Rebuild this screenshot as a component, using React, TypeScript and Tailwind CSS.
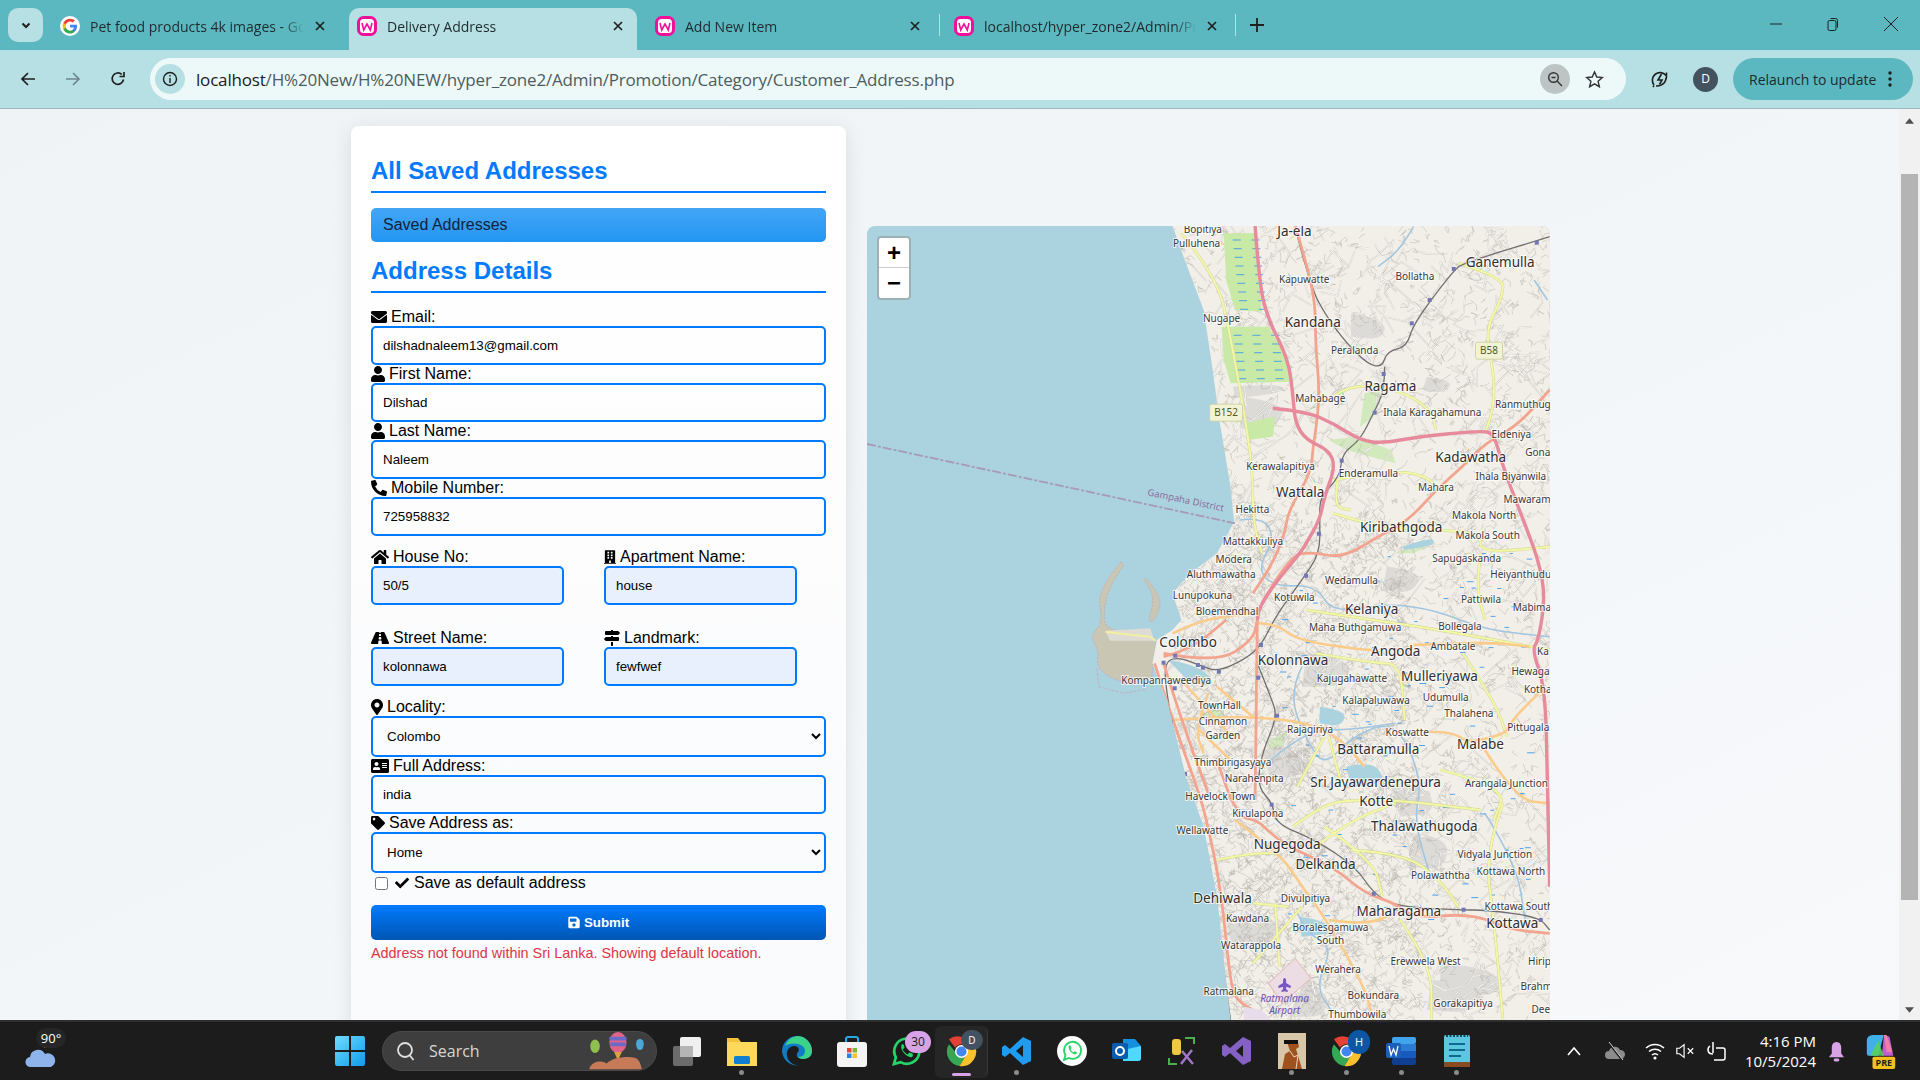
import type { ReactNode } from 'react'
import {
  FaAddressCard, FaBuilding, FaCheck, FaEnvelope, FaHome, FaMapMarkerAlt, FaMapSigns,
  FaPhoneAlt, FaPlane, FaRoad, FaSave, FaTag, FaUser,
} from 'react-icons/fa'

// map coordinates were read from two crops, x at 2.24x and y at 3x
type Pts = number[]
const mx = (x: number) => +(x / 2.24 - 7).toFixed(1)
const my = (y: number) => +(y / 3 - 6).toFixed(1)
const line = (p: Pts) => {
  let d = ''
  for (let i = 0; i < p.length; i += 2) d += `${i ? 'L' : 'M'}${mx(p[i])} ${my(p[i + 1])}`
  return d
}
const smooth = (p: Pts) => {
  let d = `M${mx(p[0])} ${my(p[1])}`
  for (let i = 2; i < p.length - 2; i += 2) {
    const ex = (p[i] + p[i + 2]) / 2
    const ey = (p[i + 1] + p[i + 3]) / 2
    d += `Q${mx(p[i])} ${my(p[i + 1])} ${mx(ex)} ${my(ey)}`
  }
  d += `L${mx(p[p.length - 2])} ${my(p[p.length - 1])}`
  return d
}

const LAND: Pts = [700,18,730,130,770,270,790,450,805,600,830,800,838,905,800,1000,740,1060,700,1120,720,1200,700,1230,665,1260,655,1330,690,1450,730,1670,770,1820,800,2030,830,2400,1560,2400,1560,18]
const PORT: Pts = [585,1025,530,1110,545,1205,515,1250,535,1290,530,1340,560,1375,620,1395,655,1380,655,1330,665,1260,640,1240,560,1230,545,1205,552,1120,590,1035]
const PORT2: Pts = [640,1075,680,1130,660,1205,645,1205,660,1130,636,1080]
const WET: Pts[] = [
  [815,40,885,40,895,200,900,275,840,270,820,180],
  [810,320,915,320,950,400,965,485,830,490,815,420],
  [860,610,930,590,925,650,870,660],
]
const GREEN: Pts[] = [
  [1050,660,1110,650,1190,690,1200,730,1170,720,1090,690],
  [1130,520,1170,510,1150,590,1120,620],
  [760,1480,810,1470,820,1500,780,1510],
  [920,1560,960,1530,940,1620,900,1630],
  [1200,1000,1260,960,1290,970,1240,1000],
]
const GREY: Pts[] = [
  [835,500,950,490,945,520,840,535],
  [860,530,960,550,930,620,880,640,850,620],
  [900,1590,1000,1560,1010,1660,920,1680],
  [1190,1700,1270,1690,1290,1780,1210,1790],
  [1300,2230,1420,2240,1440,2330,1300,2320],
  [1000,2270,1030,2300,1050,2390,960,2390],
  [1180,1040,1260,1050,1240,1120,1170,1110],
  [1100,280,1180,300,1170,360,1100,350],
  [1270,470,1330,480,1310,520,1260,510],
  [1000,1300,1100,1310,1090,1400,990,1400],
  [820,2090,940,2080,950,2180,830,2170],
  [1240,1840,1320,1850,1310,1950,1230,1940],
  [1280,2280,1400,2290,1380,2380,1270,2370],
]
const MOTORWAY: Pts[] = [
  [885,18,895,200,915,300,960,420,970,530,975,610,1000,660,1050,690,1065,740,1040,830,1030,900,995,980,985,1000,930,1090,895,1160,890,1200],
  [925,565,1000,575,1060,610,1120,660,1170,670,1250,650,1390,632,1420,640,1440,740,1480,880,1520,1020,1535,1130,1520,1260,1505,1290,1535,1400,1540,1700,1545,2000],
]
const TRUNK: Pts[] = [
  [975,18,1000,130,1020,250,1020,370,1030,520,1020,640,1015,680,1010,760,960,870,950,950,920,1040,880,1120],
  [900,1150,960,1010,1010,995,1080,1015,1160,950,1230,900,1290,810,1350,740,1400,670,1470,620,1545,510],
  [660,1330,700,1500,760,1720,780,1820,810,2020,830,2300,850,2350,910,2390],
  [680,1330,720,1500,780,1720],
  [800,1620,840,1790,890,1800,920,1840,960,1880,1060,1940,1130,2020,1200,2050,1240,2095,1370,2080,1460,2130,1545,2140],
  [890,1200,885,1740],
  [680,1300,800,1330,880,1260,890,1200],
  [680,1310,740,1290,820,1200],
]
const PRIMARY: Pts[] = [
  [700,1500,750,1495,890,1490,1010,1510,1080,1560,1130,1640],
  [780,1420,750,1530,770,1600],
  [890,1210,930,1210,980,1260,1100,1285,1145,1290],
  [1240,1275,1400,1265,1500,1280],
  [1270,1535,1330,1535,1360,1570,1450,1540,1460,1500,1520,1420],
  [1400,1590,1470,1740,1545,1750],
  [840,1800,940,1900,980,1980,1040,2090,1130,2300,1150,2400],
  [1050,2100,1130,2115,1200,2080],
  [830,1620,760,1530],
  [800,1400,880,1490],
  [700,1240,760,1200,870,1180],
  [720,1380,800,1500,840,1560],
]
const SECONDARY: Pts[] = [
  [720,40,800,170,830,350,870,650,880,780,880,900,900,1000],
  [1060,880,1150,920,1300,930,1390,940,1390,1000,1545,980],
  [1340,130,1440,170,1440,230,1400,330,1420,460,1420,560,1400,640],
  [1060,530,1100,490,1210,510,1280,570,1290,630],
  [1060,780,1200,750,1270,770,1290,800],
  [970,1820,1040,1750,1110,1740,1200,1740,1390,1770],
  [800,1920,870,1900,940,1900],
  [1040,1820,1150,1920,1170,2030],
  [1100,1890,1220,1900,1300,1980,1340,2060],
  [1210,2100,1280,2230,1280,2400],
  [1020,1300,1150,1330,1210,1330,1220,1500],
  [1350,1300,1420,1440,1450,1550],
  [930,2050,940,2240],
  [880,2050,960,2060],
  [980,1700,1040,1550],
  [1050,1550,1080,1700],
  [1000,1170,1150,1200,1300,1230,1545,1290],
  [1390,1000,1380,1100,1400,1200],
  [1440,1750,1400,1900,1420,2100,1440,2400],
  [880,2230,990,2060],
  [1070,780,1060,860,1100,870],
  [1300,1650,1450,1700,1420,1800],
  [1020,1880,1100,1800,1200,1750],
]
const RAIL: Pts[] = [
  [980,50,1010,200,1040,280,1090,370,1140,435,1170,440,1180,395,1225,380,1240,310,1330,150,1355,128,1545,50],
  [1175,440,1175,510,1150,580,1120,660,1080,700,1075,770,1030,830,1030,900,1030,1000,990,1080,930,1190,900,1275,860,1320,800,1355,760,1335,710,1310,680,1330,690,1450,720,1650,770,1900,800,2100,830,2400],
  [890,1330,920,1430,935,1490,900,1600,890,1700,925,1750,930,1810,1020,1860,1110,1940,1150,2020,1200,2060,1350,2070,1400,2070,1520,2090,1545,2130],
]
const STATIONS: Pts = [1330,147,1276,240,1236,310,1173,462,1153,578,1079,722,1028,941,999,1067,1516,68,898,1275,706,1307,757,1335,768,1343,804,1355,680,1328,705,1405,892,1373,934,1487,696,1505,728,1662,922,1754,1151,2021,1352,2069,1525,2100,790,2207,816,2352]
const RIVER: Pts[] = [
  [850,900,900,890,930,950,890,1050,930,1100,1020,1095,1060,1180,1180,1150,1290,1170,1400,1230,1545,1250],
  [990,1340,960,1420,1000,1560,1040,1640,1100,1550,1200,1500,1260,1680,1240,1800,1280,1980],
  [980,2080,1000,2140,1060,2180,1020,2300,1060,2380],
  [1240,20,1210,90,1160,140],
  [1510,180,1540,240],
  [1400,1780,1470,1930,1490,2100],
  [920,1620,1000,1530,1090,1530,1200,1510],
]
const LAKES: Pts[] = [
  [690,1320,760,1335,800,1400,740,1390],
  [1030,1460,1090,1470,1080,1520,1030,1510],
  [1090,1640,1150,1620,1180,1690,1100,1700],
  [985,2090,1040,2100,1060,2140,990,2150],
  [1215,980,1280,950,1290,975,1220,990],
]
const WIDE = new Set(['Ja-ela','Ganemulla','Kandana','Ragama','Kadawatha','Wattala','Kiribathgoda','Kelaniya','Colombo','Angoda','Kolonnawa','Mulleriyawa','Malabe','Battaramulla','Sri Jayawardenepura','Kotte','Thalawathugoda','Nugegoda','Delkanda','Dehiwala','Maharagama','Kottawa'])
const PLACES: [string, number, number][] = [
  ['Ja-ela',973,32],['Ganemulla',1434,127],['Kandana',1014,307],['Ragama',1188,497],['Kadawatha',1368,710],['Wattala',986,815],['Kiribathgoda',1212,921],['Kelaniya',1146,1167],
  ['Bopitiya',768,28],['Pulluhena',754,70],['Kapuwatte',995,178],['Bollatha',1243,170],['Nugape',810,295],['Peralanda',1108,392],['Mahabage',1031,535],['Ihala Karagahamuna',1282,577],['Ranmuthug',1485,553],['Eldeniya',1459,643],['Gona',1518,698],['Kerawalapitiya',942,739],['Enderamulla',1139,760],['Mahara',1290,803],['Ihala Biyanwila',1458,770],['Mawaram',1494,838],['Hekitta',879,868],['Makola North',1398,885],['Makola South',1406,946],['Mattakkuliya',880,963],['Modera',837,1017],['Sapugaskanda',1359,1014],['Aluthmawatha',809,1063],['Wedamulla',1101,1082],['Heiyanthudu',1480,1063],['Lunupokuna',767,1125],['Kotuwila',973,1133],['Pattiwila',1391,1138],['Mabima',1505,1163],['Bloemendhal',822,1173],['Maha Buthgamuwa',1109,1222],['Bollegala',1344,1219],
  ['Colombo',735,1266],['Angoda',1200,1292],['Kolonnawa',970,1320],['Ambatale',1328,1278],['Ka',1530,1295],['Hewaga',1502,1353],['Kotha',1518,1407],['Mulleriyawa',1298,1368],['Kompannaweediya',686,1380],['Kajugahawatte',1102,1376],['Kalapaluwawa',1156,1440],['Udumulla',1312,1433],['TownHall',805,1455],['Thalahena',1364,1479],['Cinnamon',813,1503],['Garden',813,1545],['Rajagiriya',1008,1527],['Koswatte',1226,1537],['Pittugala',1497,1523],['Malabe',1390,1572],['Battaramulla',1161,1588],['Thimbirigasyaya',835,1627],['Narahenpita',883,1675],['Sri Jayawardenepura',1155,1686],['Arangala Junction',1448,1690],['Havelock Town',807,1728],['Kotte',1156,1744],['Kirulapona',891,1780],['Thalawathugoda',1264,1817],['Wellawatte',767,1832],['Nugegoda',957,1873],['Vidyala Junction',1422,1904],['Delkanda',1043,1933],['Kottawa North',1458,1953],['Polawaththa',1300,1966],['Dehiwala',812,2035],['Divulpitiya',998,2035],['Kottawa South',1476,2058],['Maharagama',1207,2073],['Kawdana',868,2095],['Kottawa',1461,2108],['Boralesgamuwa',1054,2121],['South',1054,2160],['Watarappola',876,2175],['Erewwela West',1267,2223],['Hirip',1522,2224],['Werahera',1071,2248],['Brahm',1515,2298],['Ratmalana',826,2313],['Bokundara',1150,2325],['Gorakapitiya',1351,2351],['Dee',1525,2367],['Thumbowila',1114,2384],
]

// fixed seed so the street texture is the same on every load
function prng(seed: number) {
  let s = seed
  return () => {
    s = (s * 16807) % 2147483647
    return s / 2147483647
  }
}

function walks(seed: number, count: number, step: number, urban: boolean) {
  const r = prng(seed)
  let d = ''
  for (let i = 0; i < count; i++) {
    let x = 700 + r() * 860
    let y = 18 + r() * 2380
    // the south west is more built up
    if (urban && i % 2 === 0) {
      x = 720 + r() * 520
      y = 900 + r() * 1500
    }
    let px = mx(x)
    let py = my(y)
    d += `M${px} ${py}`
    const n = 2 + Math.floor(r() * 3)
    for (let j = 0; j < n; j++) {
      px = +(px + (r() - 0.5) * step).toFixed(1)
      py = +(py + (r() - 0.5) * step).toFixed(1)
      d += `L${px} ${py}`
    }
  }
  return d
}
const STREETS = walks(12345, 4200, 13, true)
const LANES = walks(777, 420, 44, false)

function wetDashes() {
  let d = ''
  for (let y = 60; y < 480; y += 26) {
    for (let x = 835; x < 940; x += 42) {
      const off = (y * 7) % 20
      if (y > 280 && y < 330) continue
      if (y < 280 && x > 900) continue
      d += `M${mx(x + off)} ${my(y)}h8`
    }
  }
  const r = prng(4242)
  for (let i = 0; i < 110; i++) {
    d += `M${mx(940 + r() * 560)} ${my(1000 + r() * 1100)}h${(3 + r() * 4).toFixed(1)}`
  }
  return d
}

function MapView() {
  const clip = 'land-clip'
  return (
    <svg viewBox="0 0 683 800" className="block w-[683px] h-[800px] bg-[#aad3df]" style={{ fontFamily: '"Noto Sans", sans-serif' }}>
      <defs>
        <clipPath id={clip}><path d={line(LAND) + 'Z'} /></clipPath>
      </defs>
      <path d={smooth(PORT) + 'Z'} fill="#c9c6b4" stroke="#c4a4b4" strokeWidth="0.7" strokeDasharray="2 1.5" />
      <path d={smooth(PORT2) + 'Z'} fill="#c9c7b4" stroke="#c4a4b4" strokeWidth="0.7" strokeDasharray="2 1.5" />
      <path d={line([550,1232,650,1225,660,1262,560,1262])+'Z'} fill="#dedbd5" />
      <path d={line([530,1345,535,1400,590,1420,640,1408])} fill="none" stroke="#c7a5b8" strokeWidth="0.8" strokeDasharray="3 1.5" />
      <path d={line([550,1235,590,1242,650,1250,662,1262])} fill="none" stroke="#f1f0a0" strokeWidth="2" />
      <path d={line(LAND) + 'Z'} fill="#f2efe9" />
      <g clipPath={`url(#${clip})`}>
        {GREEN.map((p, i) => <path key={i} d={line(p) + 'Z'} fill="#d2e9bd" />)}
        {GREY.map((p, i) => <path key={i} d={smooth(p) + 'Z'} fill="#dddbd8" />)}
        <path d={LANES} fill="none" stroke="#c9c5bd" strokeWidth="1.5" />
        <path d={LANES} fill="none" stroke="#fdfdfb" strokeWidth="0.8" />
        <path d={STREETS} fill="none" stroke="#b9b5ae" strokeWidth="0.5" />
        {WET.map((p, i) => <path key={i} d={line(p) + 'Z'} fill="#c9e9a6" />)}
        {LAKES.map((p, i) => <path key={i} d={smooth(p) + 'Z'} fill="#aad3df" />)}
        {RIVER.map((p, i) => <path key={i} d={smooth(p)} fill="none" stroke="#a3c6e0" strokeWidth="1.6" />)}
        <path d={wetDashes()} stroke="#3f9bea" strokeWidth="0.9" fill="none" />
        {SECONDARY.map((p, i) => <path key={i} d={smooth(p)} fill="none" stroke="#cfd48e" strokeWidth="2.8" />)}
        {SECONDARY.map((p, i) => <path key={i} d={smooth(p)} fill="none" stroke="#f4f7a8" strokeWidth="2" />)}
        {RAIL.map((p, i) => <path key={i} d={smooth(p)} fill="none" stroke="#6f6f6f" strokeWidth="1.3" />)}
        {PRIMARY.map((p, i) => <path key={i} d={smooth(p)} fill="none" stroke="#fbcb8a" strokeWidth="2.6" />)}
        {TRUNK.map((p, i) => <path key={i} d={smooth(p)} fill="none" stroke="#f3a48f" strokeWidth="2.8" />)}
        {MOTORWAY.map((p, i) => <path key={i} d={smooth(p)} fill="none" stroke="#e68a9c" strokeWidth="3.4" />)}
        {STATIONS.map((v, i) => i % 2 === 0 && <rect key={i} x={mx(v) - 2} y={my(STATIONS[i + 1]) - 2} width="4" height="4" fill="#7377b5" />)}
        <path d={line([915,2290,975,2215,1010,2275,945,2350])+'Z'} fill="#ecdde4" stroke="#e0a59a" strokeWidth="0.7" />
        <path d={line([860,2360,900,2370,920,2400,860,2400])+'Z'} fill="#e8dcea" />
      </g>
      <path d={line([16,672,840,910])} fill="none" stroke="#a899b4" strokeWidth="1.8" strokeDasharray="9 2 3 2" />
      <text transform={`translate(${mx(728)} ${my(850)}) rotate(12)`} textAnchor="middle" fontSize="9.5" fill="#8c6d9e">Gampaha District</text>
      {PLACES.map(([t, x, y]) => (
        <text
          key={t}
          x={mx(x)}
          y={my(y) + (WIDE.has(t) ? 5 : 3.6)}
          textAnchor="middle"
          fontSize={WIDE.has(t) ? 13.5 : 10}
          fill={WIDE.has(t) ? '#2e2e2e' : '#383838'}
          stroke="#ffffff"
          strokeOpacity="0.75"
          strokeWidth="2"
          paintOrder="stroke"
        >
          {t}
        </text>
      ))}
      <FaPlane x={mx(951) - 7} y={my(2295) - 7} size={14} color="#7a55c4" transform={`rotate(-90 ${mx(951)} ${my(2295)})`} />
      <text x={mx(951)} y={my(2335) + 3.5} textAnchor="middle" fontSize="10" fontStyle="italic" fill="#6d4fb6">Ratmalana</text>
      <text x={mx(951)} y={my(2372) + 3.5} textAnchor="middle" fontSize="10" fontStyle="italic" fill="#6d4fb6">Airport</text>
      <Shield x={1409} y={392} t="B58" />
      <Shield x={820} y={578} t="B152" />
    </svg>
  )
}

function Shield({ x, y, t }: { x: number; y: number; t: string }) {
  const w = t.length > 3 ? 33 : 27
  return (
    <g>
      <rect x={mx(x) - w / 2} y={my(y) - 8.5} width={w} height="17" rx="2" fill="#f1f3d4" stroke="#c9cc9a" strokeWidth="0.8" />
      <text x={mx(x)} y={my(y) + 3.5} textAnchor="middle" fontSize="10" fill="#55561f">{t}</text>
    </g>
  )
}

function Field({ icon, label, value, className }: { icon: ReactNode; label: string; value: string; className?: string }) {
  return (
    <div className={className}>
      <label className="flex items-center gap-[4px] h-[18px] text-[16px] text-black">{icon}{label}:</label>
      <input
        readOnly
        defaultValue={value}
        className="block w-full h-[39px] px-[10px] border-2 border-[#007bff] rounded-[5px] bg-transparent text-[13.33px] text-black outline-none"
      />
    </div>
  )
}

function Pick({ icon, label, value }: { icon: ReactNode; label: string; value: string }) {
  return (
    <div>
      <label className="flex items-center gap-[4px] h-[18px] text-[16px] text-black">{icon}{label}:</label>
      <select defaultValue={value} className="block w-full h-[41px] px-[10px] border-2 border-[#007bff] rounded-[5px] bg-transparent text-[13.33px] text-black outline-none">
        <option>{value}</option>
      </select>
    </div>
  )
}

const SAME = 'w-[16px] h-[16px] shrink-0'
const TINY = 'block w-full h-[39px] px-[10px] border-2 border-[#007bff] rounded-[5px] bg-[#e8f0fe] text-[13.33px] text-black outline-none'

function Small({ icon, label, value }: { icon: ReactNode; label: string; value: string }) {
  return (
    <div className="w-[193px]">
      <label className="flex items-center gap-[4px] h-[19px] text-[16px] text-black">{icon}{label}:</label>
      <input readOnly defaultValue={value} className={TINY} />
    </div>
  )
}

function AddressCard() {
  return (
    <div className="w-[495px] h-[1000px] shrink-0 px-[20px] pt-[20px] rounded-t-[8px] bg-gradient-to-b from-white to-[#f9fafc] shadow-[0_4px_20px_rgba(0,0,0,0.1)]" style={{ fontFamily: '"Liberation Sans", Arial, sans-serif' }}>
      <h2 className="h-[47px] pt-[11px] text-[24px] leading-[28px] font-bold text-[#007bff] border-b-2 border-[#007bff]">All Saved Addresses</h2>
      <div className="h-[34px] mt-[15px] pl-[12px] flex items-center rounded-[5px] text-[16px] text-[#10243a] bg-gradient-to-b from-[#42a5f5] to-[#2196f3]">Saved Addresses</div>
      <h2 className="h-[51px] mt-0 pt-[15px] text-[24px] leading-[28px] font-bold text-[#007bff] border-b-2 border-[#007bff]">Address Details</h2>
      <div className="mt-[15px]">
        <Field icon={<FaEnvelope className={SAME} />} label="Email" value="dilshadnaleem13@gmail.com" />
        <Field icon={<FaUser className="w-[14px] h-[16px] shrink-0" />} label="First Name" value="Dilshad" />
        <Field icon={<FaUser className="w-[14px] h-[16px] shrink-0" />} label="Last Name" value="Naleem" />
        <Field icon={<FaPhoneAlt className={SAME} />} label="Mobile Number" value="725958832" />
      </div>
      <div className="flex gap-[40px] mt-[11px]">
        <Small icon={<FaHome className="w-[18px] h-[16px] shrink-0" />} label="House No" value="50/5" />
        <Small icon={<FaBuilding className="w-[12px] h-[16px] shrink-0" />} label="Apartment Name" value="house" />
      </div>
      <div className="flex gap-[40px] mt-[23px]">
        <Small icon={<FaRoad className="w-[18px] h-[16px] shrink-0" />} label="Street Name" value="kolonnawa" />
        <Small icon={<FaMapSigns className={SAME} />} label="Landmark" value="fewfwef" />
      </div>
      <div className="mt-[12px]">
        <Pick icon={<FaMapMarkerAlt className="w-[12px] h-[16px] shrink-0" />} label="Locality" value="Colombo" />
        <Field icon={<FaAddressCard className="w-[18px] h-[16px] shrink-0" />} label="Full Address" value="india" />
        <Pick icon={<FaTag className="w-[14px] h-[16px] shrink-0" />} label="Save Address as" value="Home" />
      </div>
      <div className="flex items-center h-[20px] pl-[4px] text-[16px] text-black">
        <input type="checkbox" className="w-[13px] h-[13px] mr-[7px]" />
        <FaCheck className="w-[14px] h-[14px] mr-[5px]" />
        Save as default address
      </div>
      <button className="w-full h-[35px] mt-[12px] flex items-center justify-center gap-[4px] rounded-[5px] text-[13.33px] font-bold text-white bg-gradient-to-b from-[#007bff] to-[#0056b3]">
        <FaSave className="w-[12px] h-[13px]" />
        Submit
      </button>
      <p className="mt-[3px] text-[14.4px] text-[#dc3545]">Address not found within Sri Lanka. Showing default location.</p>
    </div>
  )
}

function WampIcon() {
  return (
    <svg viewBox="0 0 20 20" className="w-[20px] h-[20px] shrink-0">
      <rect x="1.5" y="1.5" width="17" height="17" rx="5" fill="#fff" stroke="#f0109a" strokeWidth="3" />
      <path d="M5 7l1.7 7 3.3-6 3.3 6L15 7" fill="none" stroke="#f0109a" strokeWidth="1.6" />
    </svg>
  )
}

function GoogleIcon() {
  return (
    <svg viewBox="0 0 48 48" className="w-[20px] h-[20px] shrink-0">
      <circle cx="24" cy="24" r="24" fill="#fff" />
      <path fill="#4285F4" d="M41 24.4c0-1.3-.1-2.300-.3-3.400H24v6.400h9.600c-.4 2.200-1.700 4-3.500 5.300v4.300h5.700c3.300-3.100 5.200-7.600 5.200-12.600z" />
      <path fill="#34A853" d="M24 42c4.700 0 8.700-1.600 11.700-4.300L30 33.400c-1.600 1.100-3.600 1.700-6 1.700-4.600 0-8.500-3.100-9.900-7.300H8.200v4.500C11.200 38.100 17.100 42 24 42z" />
      <path fill="#FBBC05" d="M14.100 27.800c-.4-1.100-.6-2.300-.6-3.600s.2-2.500.6-3.600v-4.500H8.200C7 18.400 6.300 21.100 6.300 24.200s.7 5.800 1.900 8.100l5.900-4.500z" />
      <path fill="#EA4335" d="M24 13.200c2.600 0 4.900.9 6.800 2.600l5-5C32.700 8 28.700 6.300 24 6.300c-6.900 0-12.800 3.900-15.800 9.800l5.900 4.500c1.400-4.200 5.300-7.400 9.900-7.400z" />
    </svg>
  )
}

function CloseX() {
  return (
    <svg viewBox="0 0 12 12" className="w-[12px] h-[12px] shrink-0" stroke="#1f1f1f" strokeWidth="1.700" fill="none">
      <path d="M2 2l8 8M10 2l-8 8" />
    </svg>
  )
}

function Tab({ icon, title, active, box, sep }: { icon: ReactNode; title: string; active?: boolean; box: string; sep?: boolean }) {
  return (
    <div className={`relative flex items-center h-[42px] pb-[6px] ${box} ${active ? 'bg-[#b7e0e4] rounded-t-[10px]' : ''}`}>
      {icon}
      <span className="flex-1 ml-[10px] mr-[10px] overflow-hidden whitespace-nowrap text-[14px] text-[#1f2a2c]" style={{ maskImage: 'linear-gradient(90deg,#000 90%,transparent)' }}>{title}</span>
      <CloseX />
      {sep && <span className="absolute right-0 top-[6px] w-[1px] h-[22px] bg-[#b7e0e4]" />}
    </div>
  )
}

function TabStrip() {
  return (
    <div className="h-[50px] flex items-end bg-[#5bb8c1] shrink-0" style={{ fontFamily: '"Open Sans", sans-serif' }}>
      <div className="w-[35px] h-[34px] ml-[8px] mb-[8px] rounded-[10px] bg-[#b7e0e4] flex items-center justify-center">
        <svg viewBox="0 0 12 12" className="w-[12px] h-[12px]" fill="none" stroke="#1f1f1f" strokeWidth="2"><path d="M2.500 4.500L6 8l3.500-3.500" /></svg>
      </div>
      <Tab icon={<GoogleIcon />} title="Pet food products 4k images - Google Search" box="w-[292px] ml-[5px] pl-[12px] pr-[14px]" />
      <Tab icon={<WampIcon />} title="Delivery Address" active box="w-[288px] ml-[9px] pl-[8px] pr-[13px]" />
      <Tab icon={<WampIcon />} title="Add New Item" box="w-[303px] pl-[18px] pr-[19px]" sep />
      <Tab icon={<WampIcon />} title="localhost/hyper_zone2/Admin/Promotion" box="w-[296px] pl-[14px] pr-[18px]" sep />
      <svg viewBox="0 0 14 14" className="w-[14px] h-[14px] ml-[14px] mb-[18px]" stroke="#1f1f1f" strokeWidth="1.800"><path d="M7 0v14M0 7h14" /></svg>
      <div className="flex-1" />
      <div className="flex items-center h-[48px] self-start text-[#1f1f1f]">
        <svg viewBox="0 0 14 14" className="w-[14px] h-[14px] mr-[43px]" stroke="currentColor" strokeWidth="1"><path d="M1 7h12" /></svg>
        <svg viewBox="0 0 14 14" className="w-[14px] h-[14px] mr-[44px]" stroke="currentColor" fill="none" strokeWidth="1"><rect x="2" y="3.500" width="8" height="10" rx="1.500" /><path d="M4.500 1.500h5a2 2 0 012 2v7" /></svg>
        <svg viewBox="0 0 14 14" className="w-[14px] h-[14px] mr-[22px]" stroke="currentColor" strokeWidth="1"><path d="M0 0l14 14M14 0L0 14" /></svg>
      </div>
    </div>
  )
}

function Toolbar() {
  return (
    <div className="h-[59px] shrink-0 flex items-center bg-[#b7e0e4] border-b border-[#9db9bd]" style={{ fontFamily: '"Open Sans", sans-serif' }}>
      <svg viewBox="0 0 16 16" className="w-[16px] h-[16px] ml-[20px]" fill="none" stroke="#1f1f1f" strokeWidth="1.700"><path d="M15 8H2M8 2L2 8l6 6" /></svg>
      <svg viewBox="0 0 16 16" className="w-[16px] h-[16px] ml-[29px]" fill="none" stroke="#70878a" strokeWidth="1.700"><path d="M1 8h13M8 2l6 6-6 6" /></svg>
      <svg viewBox="0 0 16 16" className="w-[16px] h-[16px] ml-[29px]" fill="none" stroke="#1f1f1f" strokeWidth="1.700"><path d="M13.500 8.500A5.700 5.700 0 1 1 11.800 3.500" /><path d="M14 1v4.500H9.500" /></svg>
      <div className="w-[1476px] h-[42px] ml-[24px] pl-[5px] pr-[4px] flex items-center rounded-full bg-[#edf9f9]">
        <div className="w-[30px] h-[30px] rounded-full bg-[#b7e0e4] flex items-center justify-center">
          <svg viewBox="0 0 16 16" className="w-[16px] h-[16px]" fill="none" stroke="#1f1f1f" strokeWidth="1.400"><circle cx="8" cy="8" r="6.500" /><path d="M8 7v5M8 4v1.500" /></svg>
        </div>
        <div className="ml-[11px] flex-1 pt-[1px] text-[17px] tracking-[-0.18px] whitespace-nowrap text-[#4d5c5e]"><span className="text-[#1a1a1a]">localhost</span>/H%20New/H%20NEW/hyper_zone2/Admin/Promotion/Category/Customer_Address.php</div>
        <div className="w-[30px] h-[30px] rounded-full bg-[#bdc4c4] flex items-center justify-center">
          <svg viewBox="0 0 16 16" className="w-[16px] h-[16px]" fill="none" stroke="#333" strokeWidth="1.400"><circle cx="6.500" cy="6.500" r="4.800" /><path d="M4.500 6.500h4M10 10l5 5" /></svg>
        </div>
        <svg viewBox="0 0 20 20" className="w-[19px] h-[19px] ml-[15px] mr-[18px]" fill="none" stroke="#333" strokeWidth="1.500"><path d="M10 2l2.400 5.400 5.800.6-4.400 3.900 1.300 5.700-5.100-3-5.100 3 1.300-5.700L1.800 8l5.800-.6z" /></svg>
      </div>
      <svg viewBox="0 0 20 20" className="w-[20px] h-[20px] ml-[24px]" fill="none" stroke="#1f1f1f" strokeWidth="1.600"><path d="M4 16.500L3 18M4 16a7.500 7.500 0 1 1 12-9.500" /><path d="M16.500 3.500C17 9 16 17 6 17" /><path d="M11.500 5L8 11h4l-2.500 4.500" /></svg>
      <div className="w-[25px] h-[25px] ml-[23px] rounded-full bg-[#42535f] flex items-center justify-center text-[12px] text-white">D</div>
      <div className="w-[180px] h-[42px] ml-[15px] pl-[16px] flex items-center rounded-full bg-[#5bb8c1] text-[14px] text-[#1f2a2c]">
        Relaunch to update
        <svg viewBox="0 0 4 16" className="w-[4px] h-[16px] ml-[12px]" fill="#1f1f1f"><circle cx="2" cy="2" r="1.700" /><circle cx="2" cy="8" r="1.700" /><circle cx="2" cy="14" r="1.700" /></svg>
      </div>
    </div>
  )
}

function Scrollbar() {
  return (
    <div className="w-[21px] shrink-0 flex flex-col items-center bg-[#f1f1f1]">
      <svg viewBox="0 0 10 6" className="w-[9px] h-[6px] mt-[9px]" fill="#505050"><path d="M5 0l5 6H0z" /></svg>
      <div className="w-[17px] h-[726px] mt-[50px] bg-[#b4b4b4]" />
      <div className="flex-1" />
      <svg viewBox="0 0 10 6" className="w-[9px] h-[6px] mb-[7px]" fill="#505050"><path d="M0 0h10L5 6z" /></svg>
    </div>
  )
}

const T = ({ children }: { children: ReactNode }) => <div className="w-[55px] h-[60px] shrink-0 relative flex items-center justify-center">{children}</div>
const Dot = () => <span className="absolute bottom-[6px] w-[5px] h-[5px] rounded-full bg-[#8a8a8a]" />

function ChromeGlyph() {
  return (
    <svg viewBox="0 0 32 32" className="w-[31px] h-[31px]">
      <path d="M16 1a15 15 0 0 1 13 7.500H16a7.500 7.500 0 0 0-6.500 3.750L3 3.300A15 15 0 0 1 16 1z" fill="#e34133" />
      <path d="M3 8.500A15 15 0 0 0 14 31l6.500-11.200a7.500 7.500 0 0 1-11-3.500z" fill="#34a853" />
      <path d="M29 8.500H16a7.500 7.500 0 0 1 4.500 11.300L14 31A15 15 0 0 0 29 8.500z" fill="#fbc02d" />
      <circle cx="16" cy="16" r="6" fill="#4285f4" stroke="#fff" strokeWidth="1.500" />
    </svg>
  )
}

function Taskbar() {
  return (
    <div className="h-[60px] shrink-0 flex items-center bg-[#1c1c1c] border-t-2 border-[#2e2e2e]" style={{ fontFamily: '"Open Sans", sans-serif' }}>
      <div className="relative w-[60px] h-[60px] ml-[20px] shrink-0">
        <svg viewBox="0 0 32 28" className="absolute left-[5px] top-[20px] w-[32px] h-[28px]"><rect x="19" y="0" width="7" height="7" fill="#e2872a" /><path d="M6 26a5 5 0 0 1-1-10 8 8 0 0 1 15-3 7 7 0 0 1 6 13z" fill="#8fb4ec" /></svg>
        <span className="absolute left-[16px] top-[7px] w-[30px] h-[20px] rounded-full bg-[#262626] text-center text-[13px] leading-[20px] text-white">90°</span>
      </div>
      <svg viewBox="0 0 30 30" className="w-[30px] h-[30px] ml-[255px] shrink-0">
        <defs><linearGradient id="win" x1="0" y1="0" x2="1" y2="1"><stop offset="0" stopColor="#6fdcff" /><stop offset="1" stopColor="#0f9bea" /></linearGradient></defs>
        <path d="M0 2a2 2 0 012-2h12v14H0zM16 0h12a2 2 0 012 2v12H16zM0 16h14v14H2a2 2 0 01-2-2zM16 16h14v12a2 2 0 01-2 2H16z" fill="url(#win)" />
      </svg>
      <div className="relative w-[275px] h-[40px] ml-[17px] shrink-0 flex items-center rounded-full bg-[#3e3e3e] border border-[#4a4a4a] text-[16px] text-[#d6d6d6]">
        <svg viewBox="0 0 20 20" className="w-[20px] h-[20px] ml-[13px]" fill="none" stroke="#e0e0e0" strokeWidth="1.800"><circle cx="9" cy="9" r="7" /><path d="M13.500 14l4 5" /></svg>
        <span className="ml-[13px]">Search</span>
        <svg viewBox="0 0 60 44" className="absolute right-[9px] top-[-1px] w-[60px] h-[42px]">
          <ellipse cx="31" cy="12" rx="9" ry="11" fill="#e0648a" /><path d="M22 8h18M23 14h16" stroke="#6a6ac8" strokeWidth="4" /><path d="M27 22l4 9 4-9z" fill="#d8a33c" />
          <ellipse cx="7" cy="16" rx="5" ry="7" fill="#8fbf4f" /><ellipse cx="54" cy="14" rx="4" ry="6" fill="#4aa8d8" />
          <path d="M1 40c2-8 12-10 18-6 6-6 20-8 30-6 5 2 6 8 7 12z" fill="#c67a58" />
        </svg>
      </div>
      <div className="flex ml-[2px]">
        <T><svg viewBox="0 0 30 30" className="w-[30px] h-[30px]"><rect x="1" y="10" width="20" height="20" rx="2" fill="#6b6b6b" /><rect x="8" y="1" width="21" height="20" rx="2" fill="#f0f0f0" /><rect x="8" y="10" width="13" height="11" fill="#b5b5b5" /></svg></T>
        <T><svg viewBox="0 0 30 30" className="w-[30px] h-[30px]"><path d="M0 2h11l3 4h16v24H0z" fill="#f2c33c" /><rect y="6" width="30" height="24" fill="#fcd95a" /><rect x="7" y="20" width="16" height="8" rx="1.500" fill="#0f7fd0" /></svg><Dot /></T>
        <T><svg viewBox="0 0 30 30" className="w-[30px] h-[30px]"><path d="M15 0a15 15 0 0 1 15 15c0 6-5 8-9 8-5 0-8-3-5-7 2-3 0-6-4-6-5 0-8 5-7 10 1 6 7 10 13 9a15 15 0 0 1-18-14A15 15 0 0 1 15 0z" fill="#0f7cc4" /><path d="M15 0a15 15 0 0 1 15 15c0 6-5 8-9 8-2 0-4-1-5-2 5 0 7-3 7-6 0-7-12-10-20-5A15 15 0 0 1 15 0z" fill="#3dd28a" /></svg></T>
        <T><svg viewBox="0 0 30 32" className="w-[30px] h-[32px]"><path d="M9 8V4a2 2 0 012-2h8a2 2 0 012 2v4" fill="none" stroke="#28a8e0" strokeWidth="2" /><rect x="0" y="7" width="30" height="25" rx="3" fill="#f4f4f4" /><rect x="10" y="13" width="4.500" height="4.500" fill="#ea4335" /><rect x="15.500" y="13" width="4.500" height="4.500" fill="#7cb342" /><rect x="10" y="18.500" width="4.500" height="4.500" fill="#1e88e5" /><rect x="15.500" y="18.500" width="4.500" height="4.500" fill="#fbc02d" /></svg></T>
        <T>
          <svg viewBox="0 0 32 32" className="w-[31px] h-[31px]"><path d="M3 29l2-7A13 13 0 1 1 10 27z" fill="none" stroke="#25d366" strokeWidth="2.800" /><path d="M11 9c-2 3 2 11 9 13 3 0 3-3 2-4l-3-1-2 2c-2-1-4-3-5-5l2-2-1-3c-1-1-2-1-2 0z" fill="#25d366" /></svg>
          <span className="absolute left-[26px] top-[10px] w-[26px] h-[22px] rounded-full bg-[#d8a3e6] text-center text-[12px] leading-[22px] text-[#1c1c1c]">30</span>
        </T>
        <T>
          <span className="absolute inset-x-[1px] top-[5px] bottom-[3px] rounded-[6px] bg-[#262626] border-r border-[#3a3a3a]" />
          <span className="relative flex"><ChromeGlyph /></span>
          <span className="absolute right-[6px] top-[9px] w-[22px] h-[20px] rounded-full bg-[#42535f] text-center text-[10px] leading-[20px] text-white">D</span>
          <span className="absolute bottom-[5px] w-[19px] h-[3px] rounded-full bg-[#d8a3e6]" />
        </T>
        <T><svg viewBox="0 0 30 30" className="w-[30px] h-[30px]"><path d="M21 1l8 4v20l-8 4L8 17l-5 4-3-2V11l3-2 5 4zM21 9l-7 6 7 6z" fill="#1f9cf0" /></svg><Dot /></T>
        <T><svg viewBox="0 0 32 32" className="w-[32px] h-[32px]"><circle cx="16" cy="16" r="15" fill="#fff" /><path d="M8 25l1.500-5A8.500 8.500 0 1 1 13 23z" fill="none" stroke="#25d366" strokeWidth="1.800" /><path d="M13 11c-1.500 2 1.500 7 6 8.500 2 0 2-2 1.500-2.500l-2-.8-1 1c-1.200-.6-2.500-2-3-3l1-1.200-.8-2c-.6-.6-1.300-.6-1.700 0z" fill="#25d366" /></svg></T>
        <T><svg viewBox="0 0 30 30" className="w-[30px] h-[30px]"><path d="M11 3h12l6 7v12a3 3 0 01-3 3H11z" fill="#1490df" /><path d="M11 14l18-4v12a3 3 0 01-3 3H11z" fill="#50d9ff" /><rect x="0" y="7" width="16" height="16" rx="2" fill="#0a5cad" /><circle cx="8" cy="15" r="4" fill="none" stroke="#fff" strokeWidth="2" /></svg></T>
        <T><svg viewBox="0 0 30 30" className="w-[30px] h-[30px]" fill="none"><rect x="5" y="3" width="9" height="16" rx="3" fill="#f2c744" /><path d="M18 2h9v6M2 22v6h8" stroke="#4caf50" strokeWidth="2" /><path d="M15 15l11 13M25 14L14 28" stroke="#a076c8" strokeWidth="2.500" /></svg></T>
        <T><svg viewBox="0 0 30 30" className="w-[30px] h-[30px]"><path d="M21 1l8 4v20l-8 4-13-12-5 4-3-2V10l3-2 5 4zM21 9l-7 6 7 6z" fill="#8661c5" /></svg></T>
        <T><svg viewBox="0 0 28 36" className="w-[28px] h-[36px]"><rect width="28" height="36" fill="#d8c6a8" /><path d="M9 9h11l1 5-3 2 6 20H4l3-15 5-3z" fill="#a0521e" /><rect x="6" y="7" width="14" height="4" fill="#111" /><path d="M12 18l4 6 4-2-2 14" stroke="#e5d9c0" fill="none" /></svg><Dot /></T>
        <T>
          <ChromeGlyph />
          <span className="absolute right-[4px] top-[9px] w-[22px] h-[24px] rounded-full bg-[#0b57a4] text-center text-[11px] leading-[24px] text-white">H</span>
          <Dot />
        </T>
        <T><svg viewBox="0 0 32 32" className="w-[32px] h-[32px]"><rect x="6" y="2" width="24" height="7" rx="2" fill="#41a5ee" /><rect x="6" y="9" width="24" height="7" fill="#2b7cd3" /><rect x="6" y="16" width="24" height="7" fill="#185abd" /><rect x="6" y="23" width="24" height="7" rx="2" fill="#103f91" /><rect x="0" y="8" width="15" height="15" rx="2" fill="#1a5fb8" /><path d="M3 11l2 9 2.500-6L10 20l2-9" fill="none" stroke="#fff" strokeWidth="1.300" /></svg><Dot /></T>
        <T><svg viewBox="0 0 26 32" className="w-[26px] h-[32px]"><rect width="26" height="32" rx="2" fill="#5ec7e0" /><rect y="27" width="26" height="5" fill="#8a4b20" /><path d="M5 9h16M5 15h16M5 21h12" stroke="#0e6b8f" strokeWidth="2.200" /><path d="M2 1h22" stroke="#14495c" strokeWidth="2" strokeDasharray="2 1.500" /></svg><Dot /></T>
      </div>
      <div className="flex-1" />
      <svg viewBox="0 0 14 10" className="w-[14px] h-[10px] mr-[23px]" fill="none" stroke="#fff" strokeWidth="1.600"><path d="M1 9l6-7 6 7" /></svg>
      <svg viewBox="0 0 22 20" className="w-[22px] h-[20px] mr-[19px]"><path d="M5 18a4 4 0 010-8 6 6 0 0111-1 4.500 4.500 0 011 9z" fill="#8c8c8c" /><path d="M4 1l14 18" stroke="#1c1c1c" strokeWidth="2" /><path d="M5 1l14 18" stroke="#cfcfcf" strokeWidth="1" /></svg>
      <svg viewBox="0 0 20 18" className="w-[20px] h-[18px] mr-[10px]" fill="none" stroke="#fff" strokeWidth="1.500"><path d="M1 6a13 13 0 0118 0M4 9.500a9 9 0 0112 0M7 13a4.500 4.500 0 016 0" /><circle cx="10" cy="16" r="0.800" /></svg>
      <svg viewBox="0 0 22 18" className="w-[20px] h-[18px] mr-[10px]" fill="none" stroke="#fff" strokeWidth="1.300"><path d="M2 6v6h3l5 4V2L5 6z" /><path d="M14 6l6 6M20 6l-6 6" /></svg>
      <svg viewBox="0 0 22 22" className="w-[22px] h-[22px] mr-[17px]" fill="none" stroke="#fff" strokeWidth="1.500"><path d="M8 2v11M5 6c-3 2-3 8 3 8" /><path d="M11 8h7a2 2 0 012 2v8a2 2 0 01-2 2H9" /></svg>
      <div className="w-[72px] text-right text-[15px] leading-[20px] text-white shrink-0 whitespace-nowrap">
        <div>4:16 PM</div>
        <div>10/5/2024</div>
      </div>
      <svg viewBox="0 0 18 22" className="w-[17px] h-[21px] ml-[12px]" fill="#d8a3e6"><path d="M9 1c3.500 0 5 3 5 6v6l3 4H1l3-4V7c0-3 1.500-6 5-6z" /><rect x="6" y="18.500" width="6" height="3" rx="1.500" /></svg>
      <svg viewBox="0 0 30 38" className="w-[30px] h-[36px] ml-[21px] mr-[24px]">
        <path d="M6 2h12l-6 22H3a3 3 0 01-3-3V8a6 6 0 016-6z" fill="#3fb1e8" /><path d="M18 2l6 2 4 20H16z" fill="#c35ed1" /><path d="M12 8l6 16H4z" fill="#58d05b" opacity="0.900" /><path d="M18 2h3l6 18h-6z" fill="#f17ea3" />
        <rect x="6" y="25" width="24" height="13" rx="2" fill="#f4c01e" /><text x="18" y="35" textAnchor="middle" fontSize="9.500" fontWeight="700" fill="#1c1c1c">PRE</text>
      </svg>
    </div>
  )
}

export default function App() {
  return (
    <div className="w-[1920px] h-[1080px] flex flex-col overflow-hidden">
      <TabStrip />
      <Toolbar />
      <div className="flex-1 min-h-0 flex bg-[#eef2f5]">
        <div className="flex-1 min-w-0 overflow-hidden flex items-start pl-[351px] pt-[17px] gap-[21px] bg-gradient-to-br from-[#eff3f6] to-[#f7f9fb]">
          <AddressCard />
          <div className="relative w-[683px] h-[800px] mt-[100px] shrink-0 rounded-t-[8px] overflow-hidden">
            <MapView />
            <div className="absolute left-[10px] top-[10px] w-[34px] rounded-[4px] border-2 border-[#9fb0b5] bg-white text-black">
              <div className="h-[30px] flex items-center justify-center border-b border-[#ccc] text-[24px] font-bold leading-none" style={{ fontFamily: '"Liberation Sans", sans-serif' }}>+</div>
              <div className="h-[30px] flex items-center justify-center text-[24px] font-bold leading-none" style={{ fontFamily: '"Liberation Sans", sans-serif' }}>−</div>
            </div>
          </div>
        </div>
        <Scrollbar />
      </div>
      <Taskbar />
    </div>
  )
}
